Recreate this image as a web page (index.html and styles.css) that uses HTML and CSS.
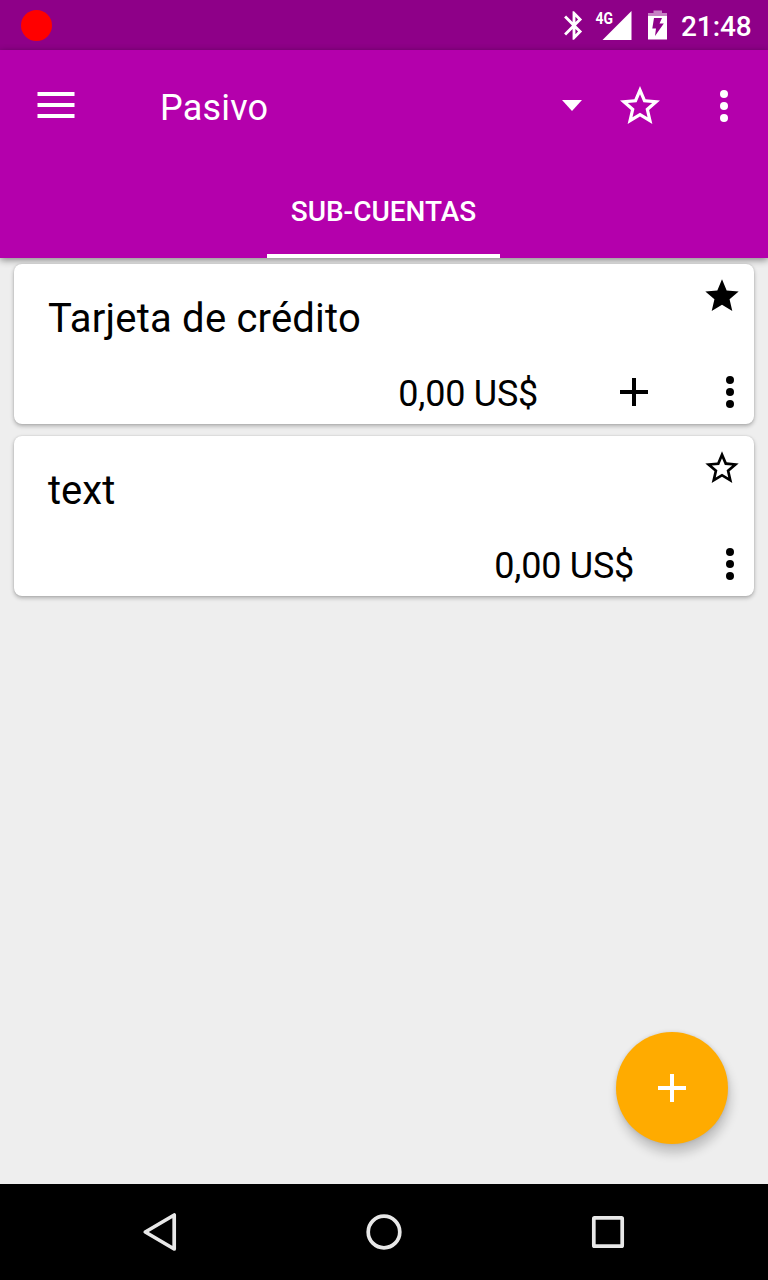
FILE: index.html
```html
<!DOCTYPE html>
<html lang="es">
<head>
<meta charset="utf-8">
<title>Pasivo</title>
<link rel="stylesheet" href="styles.css">
</head>
<body>
<div class="screen">
  <div class="status-bar">
    <span class="record-dot"></span>
    <div class="status-icons">
      <svg class="bluetooth" viewBox="0 0 24 24"><path d="M17.71 7.71L12 2h-1v7.59L6.41 5 5 6.41 10.59 12 5 17.59 6.41 19 11 14.41V22h1l5.71-5.71-4.3-4.29 4.3-4.29zM13 5.83l1.88 1.88L13 9.59V5.83zm1.88 10.46L13 18.17v-3.76l1.88 1.88z"/></svg>
      <svg class="signal" viewBox="0 0 38 34"><path d="M36.500 4v29H7.500z"/><text x=".5" y="17" textLength="17.500" lengthAdjust="spacingAndGlyphs">4G</text></svg>
      <svg class="battery" viewBox="0 0 20 30"><path class="dim" d="M5.500 .500h8.500V3H19v3H0V3h5.500z"/><path fill-rule="evenodd" d="M0 6h19v23.500H0zM6 8L4.300 18.500H8L7 26 15.800 13.500H11.500L14 8z"/></svg>
      <span class="clock">21:48</span>
    </div>
  </div>

  <header class="app-bar">
    <div class="toolbar">
      <svg class="menu-icon" viewBox="0 0 38 26"><path d="M.5 0h37v4H.5zM.5 11h37v4H.5zM.5 22h37v4H.5z"/></svg>
      <h1 class="title">Pasivo</h1>
      <svg class="caret" viewBox="0 0 20 11"><path d="M0 0h20L10 11z"/></svg>
      <svg class="icon bar-star" viewBox="0 0 24 24"><path d="M22 9.240l-7.190-.62L12 2 9.190 8.630 2 9.240l5.460 4.730L5.820 21 12 17.270 18.180 21l-1.630-7.030L22 9.240zM12 15.400l-3.760 2.270 1-4.280-3.320-2.880 4.380-.38L12 6.100l1.710 4.040 4.380.38-3.320 2.880 1 4.280L12 15.400z"/></svg>
      <svg class="icon" viewBox="0 0 24 24"><circle cx="12" cy="6" r="2"/><circle cx="12" cy="12" r="2"/><circle cx="12" cy="18" r="2"/></svg>
    </div>
    <nav class="tabs"><span class="tab">SUB-CUENTAS</span></nav>
  </header>

  <main class="content">
    <article class="card">
      <div class="card-head">
        <h2 class="name">Tarjeta de crédito</h2>
        <svg class="star" viewBox="0 0 24 24"><path d="M12 17.270L18.180 21l-1.640-7.030L22 9.240l-7.190-.61L12 2 9.190 8.630 2 9.240l5.460 4.730L5.820 21z"/></svg>
      </div>
      <div class="card-foot">
        <span class="amount">0,00 US$</span>
        <svg class="icon add" viewBox="0 0 24 24"><path d="M19 13h-6v6h-2v-6H5v-2h6V5h2v6h6v2z"/></svg>
        <svg class="icon" viewBox="0 0 24 24"><circle cx="12" cy="6" r="2"/><circle cx="12" cy="12" r="2"/><circle cx="12" cy="18" r="2"/></svg>
      </div>
    </article>
    <article class="card">
      <div class="card-head">
        <h2 class="name name-short">text</h2>
        <svg class="star" viewBox="0 0 24 24"><path d="M22 9.240l-7.190-.62L12 2 9.190 8.630 2 9.240l5.460 4.730L5.820 21 12 17.270 18.180 21l-1.630-7.030L22 9.240zM12 15.400l-3.760 2.270 1-4.280-3.320-2.880 4.380-.38L12 6.100l1.710 4.040 4.380.38-3.320 2.880 1 4.280L12 15.400z"/></svg>
      </div>
      <div class="card-foot">
        <span class="amount">0,00 US$</span>
        <svg class="icon" viewBox="0 0 24 24"><circle cx="12" cy="6" r="2"/><circle cx="12" cy="12" r="2"/><circle cx="12" cy="18" r="2"/></svg>
      </div>
    </article>
    <div class="fab"><svg class="icon" viewBox="0 0 24 24"><path d="M19 13h-6v6h-2v-6H5v-2h6V5h2v6h6v2z"/></svg></div>
  </main>

  <footer class="nav-bar">
    <svg class="nav-icon" viewBox="0 0 40 40"><path d="M5.300 20L34.200 3v34z"/></svg>
    <svg class="nav-icon" viewBox="0 0 40 40"><circle cx="20" cy="20" r="15.800"/></svg>
    <svg class="nav-icon" viewBox="0 0 40 40"><rect x="5.800" y="5.800" width="28.400" height="28.400" rx=".8"/></svg>
  </footer>
</div>
</body>
</html>
```
FILE: styles.css
```css
* { box-sizing: border-box; }

body {
  margin: 0;
  font-family: Roboto, "Liberation Sans", sans-serif;
}

svg { display: block; flex: none; fill: currentColor; }

h1, h2 { margin: 0; font-weight: 400; }

.screen {
  display: flex;
  flex-direction: column;
  width: 768px;
  height: 1280px;
  overflow: hidden;
  background: #eee;
}

.status-bar {
  display: flex;
  justify-content: space-between;
  align-items: center;
  height: 50px;
  padding: 0 17px 0 21px;
  background: #8e0088;
  color: #fff;
}

.record-dot {
  width: 31px;
  height: 31px;
  border-radius: 50%;
  background: #f00;
}

.status-icons { display: flex; align-items: center; height: 50px; }

.bluetooth { width: 34px; height: 35px; }

.signal { width: 38px; height: 34px; margin: -3px 0 0 4px; }

.signal text { font-size: 17px; font-weight: 700; }

.battery { width: 20px; height: 30px; margin-left: 15px; }

.battery .dim { opacity: .5; }

.clock {
  width: 70px;
  margin-left: 13px;
  padding-top: 3px;
  font-size: 28px;
  font-weight: 500;
  line-height: 32px;
  letter-spacing: -.1px;
}

.app-bar {
  height: 208px;
  background: #b400ac;
  color: #fff;
  box-shadow: 0 2px 7px rgba(0, 0, 0, .45);
}

.toolbar {
  display: flex;
  align-items: center;
  height: 112px;
  padding: 0 20px 0 37px;
}

.icon { width: 48px; height: 48px; }

.menu-icon { width: 38px; height: 26px; margin-top: -2px; }

.title {
  flex: 1;
  margin-left: 85px;
  padding-top: 3px;
  font-size: 36px;
  line-height: 42px;
  letter-spacing: .2px;
}

.caret { width: 20px; height: 11px; margin-top: -2px; }

.bar-star { margin: 0 36px 0 34px; }

.tabs { display: flex; justify-content: center; height: 96px; }

.tab {
  width: 233px;
  margin-right: 1px;
  padding-top: 2px;
  border-bottom: 4px solid #fff;
  font-size: 28px;
  font-weight: 500;
  line-height: 96px;
  text-align: center;
}

.content {
  position: relative;
  display: flex;
  flex: 1;
  flex-direction: column;
  gap: 12px;
  padding: 6px 14px;
}

.card {
  display: flex;
  flex-direction: column;
  justify-content: space-between;
  height: 160px;
  border-radius: 8px;
  background: #fff;
  color: #000;
  box-shadow: 0 2px 4px rgba(0, 0, 0, .28), 0 0 2px rgba(0, 0, 0, .12);
}

.card-head {
  display: flex;
  justify-content: space-between;
  padding: 12px 12px 0 34px;
}

.name {
  padding-top: 19px;
  font-size: 40px;
  line-height: 47px;
  letter-spacing: .2px;
}

.name-short { letter-spacing: 0; }

.star { width: 40px; height: 40px; }

.card-foot {
  display: flex;
  justify-content: flex-end;
  align-items: center;
  height: 64px;
}

.amount {
  margin-right: 72px;
  padding-top: 3px;
  font-size: 36px;
  line-height: 42px;
  letter-spacing: -.25px;
}

.add { margin-right: 48px; }

.fab {
  position: absolute;
  right: 40px;
  bottom: 40px;
  display: flex;
  align-items: center;
  justify-content: center;
  width: 112px;
  height: 112px;
  border-radius: 50%;
  background: #ffab00;
  color: #fff;
  box-shadow: 2px 9px 11px rgba(0, 0, 0, .2), 0 0 4px rgba(0, 0, 0, .12);
}

.nav-bar {
  display: flex;
  justify-content: center;
  align-items: center;
  gap: 184px;
  height: 96px;
  background: #000;
  color: #e8e8e8;
}

.nav-icon {
  width: 40px;
  height: 40px;
  fill: none;
  stroke: currentColor;
  stroke-width: 3.700px;
  stroke-linejoin: round;
}
```
